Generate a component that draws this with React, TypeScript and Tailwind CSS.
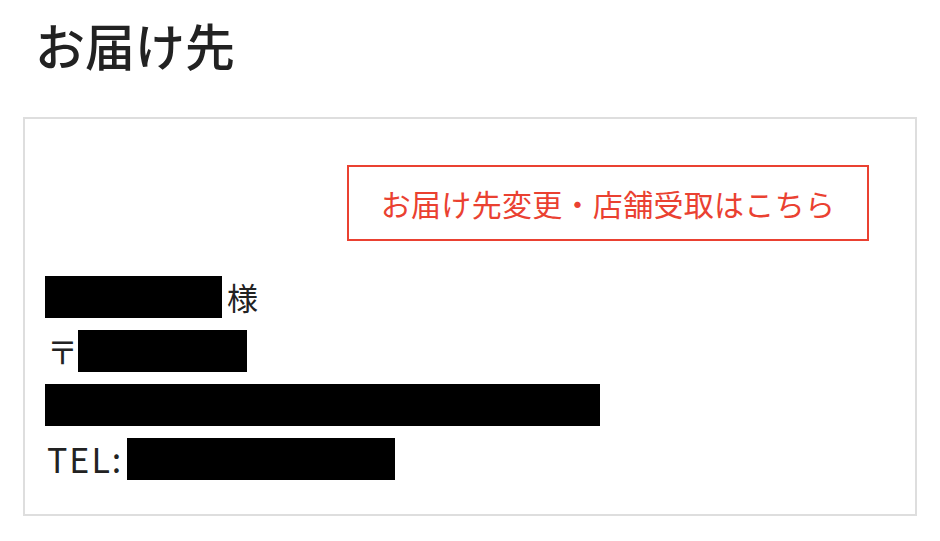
export default function App() {
    return (
        <div className="min-h-screen bg-white font-['Noto_Sans_CJK_JP','Noto_Sans',sans-serif] text-[#222]">
            {/* Title */}
            <h1 className="pl-[35px] pt-[16px] text-[50px] leading-[56px] font-medium">お届け先</h1>

            {/* Address card */}
            <div className="mx-[23px] mt-[45px] w-[894px] border-2 border-[#dedede] px-[20px] pt-[46px] pb-[28px]">
                <div className="flex justify-end pr-[26px]">
                    <button className="flex h-[76px] w-[522px] items-center justify-center border-2 border-[#ea4131] text-[30px] tracking-[0.3px] text-[#ea4131]">
                        お届け先変更・店舗受取はこちら
                    </button>
                </div>

                <div className="mt-[29px] text-[31px]">
                    <div className="flex h-[54px] items-center">
                        <span className="h-[42px] w-[177px] bg-black" />
                        <span className="ml-[5px]">様</span>
                    </div>
                    <div className="flex h-[54px] items-center">
                        <span className="ml-[2px]">〒</span>
                        <span className="h-[42px] w-[169px] bg-black" />
                    </div>
                    <div className="flex h-[54px] items-center">
                        <span className="h-[42px] w-[555px] bg-black" />
                    </div>
                    <div className="flex h-[54px] items-center">
                        <span className="ml-[2px] text-[34px] leading-none tracking-[2px]">TEL:</span>
                        <span className="ml-[4px] h-[42px] w-[268px] bg-black" />
                    </div>
                </div>
            </div>
        </div>
    );
}
